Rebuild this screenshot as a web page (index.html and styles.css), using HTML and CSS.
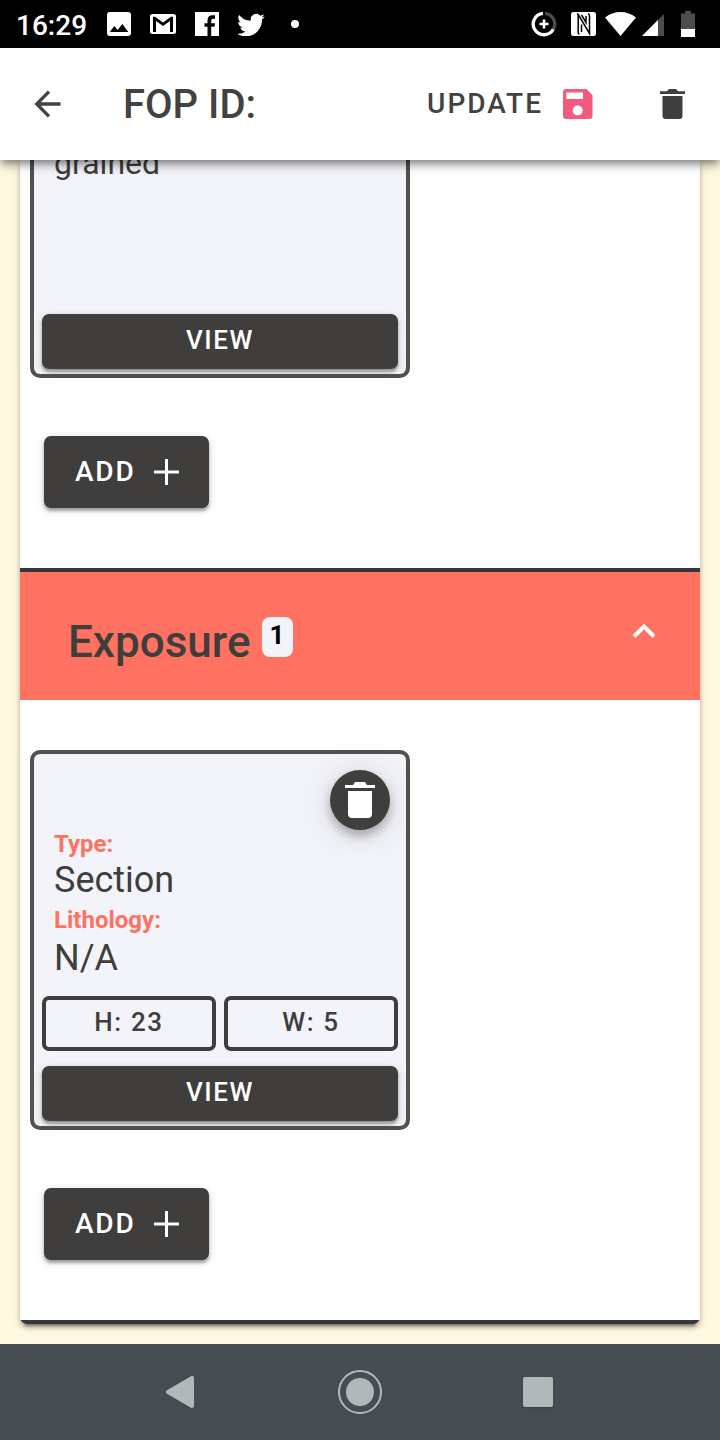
FILE: index.html
```html
<!DOCTYPE html>
<html lang="en">
<head>
<meta charset="utf-8">
<title>FOP ID:</title>
<link rel="stylesheet" href="styles.css">
</head>
<body>
<div class="screen">
  <header class="status">
    <span class="time">16:29</span>
    <div class="status-left">
      <svg width="24" height="24" viewBox="3 3 18 18"><path fill="#fff" d="M21 19V5c0-1.100-.9-2-2-2H5c-1.100 0-2 .9-2 2v14c0 1.100.9 2 2 2h14c1.100 0 2-.9 2-2zM8.500 13.500l2.500 3.010L14.500 12l4.500 6H5l3.500-4.500z"/></svg>
      <svg width="26" height="20" viewBox="0 0 26 20"><path fill="#fff" fill-rule="evenodd" d="M2.500 0h21Q26 0 26 2.500v15Q26 20 23.500 20h-21Q0 20 0 17.500v-15Q0 0 2.500 0zM3 2.800V18h3V7l7 5 7-5v11h3V2.800h-2l-8 5.700-8-5.700z"/></svg>
      <svg width="24" height="24" viewBox="0 0 24 24"><path fill="#fff" d="M0 0h24v24H0z"/><path fill="#000" d="M12.500 24v-9.200h-3v-3.600h3V8.500q0-5.300 5.200-5.300H20v3.600h-2q-1.800 0-1.800 1.800v2.600H20l-.5 3.600h-3.300V24z"/></svg>
      <svg width="28" height="23" viewBox="0 1.500 24 20"><path fill="#fff" d="M23.950 4.570a10 10 0 0 1-2.820.77 4.960 4.960 0 0 0 2.160-2.720c-.95.550-2 .950-3.130 1.180a4.920 4.920 0 0 0-8.380 4.480C7.690 8.090 4.070 6.130 1.640 3.160a4.820 4.820 0 0 0-.67 2.470c0 1.710.870 3.210 2.190 4.100a4.900 4.900 0 0 1-2.230-.62v.06a4.920 4.920 0 0 0 3.950 4.830 5 5 0 0 1-2.210.08 4.940 4.940 0 0 0 4.600 3.420A9.870 9.870 0 0 1 0 19.540a14 14 0 0 0 7.550 2.210c9.050 0 14-7.500 14-13.980 0-.21 0-.42-.02-.63a9.940 9.940 0 0 0 2.460-2.550z"/></svg>
      <svg width="8" height="8" viewBox="0 0 8 8"><circle cx="4" cy="4" r="4" fill="#fff"/></svg>
    </div>
    <div class="status-right">
      <svg width="26" height="26" viewBox="0 0 26 26"><g fill="none"><path d="M14 2.400A10.700 10.700 0 0 1 22.300 18.300" stroke="#4c4c4c" stroke-width="3.300"/><path d="M12 2.400A10.700 10.700 0 1 0 22.300 18.300" stroke="#fff" stroke-width="3.300"/><path d="M13 8.500v9M8.500 13h9" stroke="#fff" stroke-width="2.600"/></g></svg>
      <svg class="nfc" width="25" height="24" viewBox="0 0 25 24"><rect width="25" height="24" rx="2.500" fill="#fff"/><path d="M6 1.500Q7.200 2 7.200 4v16.500q0 1.500 1.300 1.500M7.200 2.500 18.500 21.500V4q0-2-1.300-2.500M10.500 20V12.500M10.500 3l4.500 7.500V4" fill="none" stroke="#000" stroke-width="1.500"/></svg>
      <svg class="wifi" width="31" height="24" viewBox="0 0 31 24"><path fill="#fff" d="M0 5.500Q7 0 15.500 0T31 5.500L15.500 24z"/></svg>
      <svg class="signal" width="22" height="22" viewBox="0 0 22 22"><path fill="#4c4c4c" d="M22 0v22H0z"/><path fill="#fff" d="M16 6v16H0z"/></svg>
      <svg width="14" height="26" viewBox="0 0 14 26"><path fill="#4c4c4c" d="M4 0h6v2.500h4V18H0V2.500h4z"/><path fill="#fff" d="M0 18h14v8H0z"/></svg>
    </div>
  </header>

  <nav class="toolbar">
    <svg class="back" width="28" height="28" viewBox="0 0 28 28"><path d="M15 1.700 2.700 14 15 26.300M2.700 14H26.500" fill="none" stroke="#424242" stroke-width="3.300"/></svg>
    <h1 class="title">FOP ID:</h1>
    <span class="update">UPDATE</span>
    <svg class="save" width="30" height="30" viewBox="0 0 30 30"><path fill="#f25c7c" fill-rule="evenodd" d="M3 0h20.500L29.500 6v21q0 3-3 3H3q-3 0-3-3V3q0-3 3-3zM3.300 3.500V10H20V3.500zM14.700 16.500a5 5 0 1 0 0 10 5 5 0 0 0 0-10z"/></svg>
    <svg width="25" height="30" viewBox="0 0 25 30"><path fill="#3f3e3c" d="M0 2.300h7L9 0h7l2 2.300h7V5H0zM2.500 7h20v19.500Q22.500 30 19.500 30h-14Q2.500 30 2.500 26.500z"/></svg>
  </nav>

  <main class="content">
    <div class="panel">
      <section class="group group-first">
        <article class="card card-clipped">
          <div class="clipped-value">grained</div>
          <button class="view">VIEW</button>
        </article>
        <button class="add"><span>ADD</span><svg width="26" height="26" viewBox="0 0 26 26"><path d="M12.500 0v26M0 13h25" stroke="#fff" stroke-width="3"/></svg></button>
      </section>
      <div class="section-head">
        <h2>Exposure</h2>
        <span class="count">1</span>
        <svg class="chevron" width="24" height="16" viewBox="0 0 24 16"><path d="M2 13.500 12 3.500l10 10" fill="none" stroke="#fff" stroke-width="3.900"/></svg>
      </div>
      <section class="group">
        <article class="card">
          <button class="remove" aria-label="Delete"><svg width="30" height="36" viewBox="0 0 30 36"><path fill="#fff" d="M0 3h8l2-3h10l2 3h8v3H0zM3 9h24v23q0 4-4 4H7q-4 0-4-4z"/></svg></button>
          <dl class="details">
            <dt>Type:</dt><dd>Section</dd>
            <dt>Lithology:</dt><dd class="last">N/A</dd>
          </dl>
          <div class="sizes"><span>H: 23</span><span>W: 5</span></div>
          <button class="view">VIEW</button>
        </article>
        <button class="add"><span>ADD</span><svg width="26" height="26" viewBox="0 0 26 26"><path d="M12.500 0v26M0 13h25" stroke="#fff" stroke-width="3"/></svg></button>
      </section>
    </div>
  </main>

  <footer class="navbar">
    <svg width="28" height="32" viewBox="0 0 28 32"><path d="M2 16 26 2v28z" fill="#b2b7b8" stroke="#b2b7b8" stroke-width="4" stroke-linejoin="round"/></svg>
    <svg class="home" width="44" height="44" viewBox="0 0 44 44"><circle cx="22" cy="22" r="21" fill="none" stroke="#b2b7b8" stroke-width="2"/><circle cx="22" cy="22" r="14" fill="#b2b7b8"/></svg>
    <span class="recent"></span>
  </footer>
</div>
</body>
</html>
```
FILE: styles.css
```css
* { box-sizing: border-box; }
body { margin: 0; font-family: Roboto, sans-serif; color: #3f3e3c; }
button { border: 0; font-family: inherit; padding: 0; }
svg { display: block; flex: none; }

.screen { width: 720px; height: 1440px; display: flex; flex-direction: column; overflow: hidden; }

.status { height: 48px; flex: none; background: #000; display: flex; align-items: center; padding: 0 25px 0 16px; }
.time { width: 91px; color: #fff; font-size: 28px; font-weight: 500; line-height: 34px; padding-top: 4px; }
.status-left { display: flex; align-items: center; gap: 19px; }
.status-left svg:nth-child(4) { margin-left: -1px; }
.status-left svg:last-child { margin-left: 7px; }
.status-right { display: flex; align-items: center; margin-left: auto; }
.nfc { margin-left: 14px; }
.wifi { margin-left: 9px; }
.signal { margin: 2px 17px 0 6px; }

.toolbar { height: 112px; flex: none; background: #fff; display: flex; align-items: center; padding: 0 35px 0 34px; z-index: 1; box-shadow: 0 4px 8px -2px rgba(0,0,0,.4), 0 6px 10px rgba(0,0,0,.22); }
.title { margin: 0 0 0 61px; padding-top: 2px; font-size: 40px; font-weight: 500; line-height: 48px; color: #424242; }
.update { margin-left: auto; padding-bottom: 2px; font-size: 28px; font-weight: 500; letter-spacing: 2px; color: #424242; }
.save { margin: 0 67px 0 20px; }

.content { height: 1184px; flex: none; overflow: hidden; background: #fff9e1; padding: 0 20px; }
.panel { height: 1164px; background: linear-gradient(#fff 1160px, #37363a 1160px); border-radius: 0 0 7px 7px; box-shadow: 0 6px 2px -4px rgba(0,0,0,.3), 0 4px 4px rgba(0,0,0,.2), 0 2px 10px rgba(0,0,0,.16); }
.group { padding: 50px 10px 60px; display: flex; flex-direction: column; align-items: flex-start; }
.group-first { padding-top: 0; }

.card { width: 380px; height: 380px; border: 4px solid #525150; border-radius: 10px; background: #f3f4f9; padding: 0 8px 5px; display: flex; flex-direction: column; }
.card-clipped { height: 218px; border-top: 0; border-radius: 0 0 10px 10px; }
.clipped-value { margin: -19px 0 0 12px; font-size: 32px; line-height: 44px; }
.view { width: 100%; height: 55px; flex: none; margin-top: auto; border-radius: 7px; background: #3f3e3c; color: #fff; font-size: 26px; font-weight: 500; letter-spacing: 1.600px; line-height: 30px; padding-bottom: 3px; box-shadow: 0 3px 3px rgba(0,0,0,.3), 0 2px 8px rgba(0,0,0,.16); }
.add { margin: 58px 0 0 14px; width: 165px; height: 72px; border-radius: 7px; background: #3f3e3c; color: #fff; font-size: 28px; font-weight: 500; letter-spacing: 1.800px; display: flex; align-items: center; justify-content: space-between; padding: 0 29px 0 31px; box-shadow: 0 3px 3px rgba(0,0,0,.3), 0 2px 8px rgba(0,0,0,.16); }
.add span { padding-bottom: 2px; }

.section-head { height: 132px; border-top: 4px solid #37363a; background: #ff7161; display: flex; align-items: flex-start; padding: 45px 44px 0 48px; }
h2 { margin: 0; font-size: 44px; font-weight: 500; line-height: 50px; }
.count { margin-left: 11px; width: 31px; height: 40px; border-radius: 8px; background: #f3f4f9; color: #000; font-size: 26px; font-weight: 700; line-height: 36px; text-align: center; }
.chevron { margin: 6px 0 0 auto; }

.remove { align-self: flex-end; margin: 16px 8px 0 0; width: 60px; height: 60px; flex: none; border-radius: 50%; background: #3f3e3c; display: flex; align-items: center; justify-content: center; box-shadow: 0 6px 10px rgba(0,0,0,.25), 0 4px 32px rgba(0,0,0,.15); }
.details { margin: 0 0 0 12px; }
dt { color: #ff7161; font-size: 24px; font-weight: 700; line-height: 28px; }
dd { margin: 0; font-size: 36px; line-height: 44px; height: 48px; }
.last { padding-top: 2px; }
.sizes { display: grid; grid-template-columns: 1fr 1fr; gap: 8px; margin-top: 14px; }
.sizes span { height: 55px; border: 4px solid #3f3e3c; border-radius: 7px; text-align: center; font-size: 26px; font-weight: 500; letter-spacing: 1.600px; line-height: 44px; }

.navbar { height: 96px; flex: none; background: #454d53; display: flex; align-items: center; padding-left: 166px; }
.home { margin: 0 141px 0 144px; }
.recent { width: 30px; height: 30px; border-radius: 2px; background: #b2b7b8; box-shadow: 0 1px 2px rgba(0,0,0,.2); }
```
